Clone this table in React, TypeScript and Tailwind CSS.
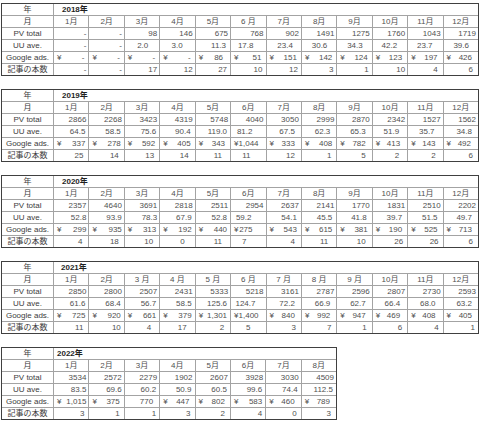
import React from "react";

type G = [boolean, string];
type T = {
  year: string;
  bg: string;
  months: string[];
  pv: string[];
  uu: string[];
  g: G[];
  c: string[];
  pu: number[];
  pg: number[];
  pc: number[];
  titlePl: string;
  wide: boolean;
};

const PR: Record<number, string> = {
  0: "pr-[0px]", 1: "pr-[1px]", 2: "pr-[2px]", 3: "pr-[3px]", 4: "pr-[4px]", 5: "pr-[5px]",
  6: "pr-[6px]", 7: "pr-[7px]", 8: "pr-[8px]", 9: "pr-[9px]", 10: "pr-[10px]", 11: "pr-[11px]",
  12: "pr-[12px]", 13: "pr-[13px]", 14: "pr-[14px]", 15: "pr-[15px]", 16: "pr-[16px]",
  17: "pr-[17px]", 18: "pr-[18px]", 19: "pr-[19px]", 20: "pr-[20px]",
};

const m12 = ["1月", "2月", "3月", "4月", "5月", "6 月", "7月", "8月", "9月", "10月", "11月", "12月"];
const m12b = ["1月", "2月", "3月", "4月", "5月", "6月", "7月", "8月", "9月", "10月", "11月", "12月"];
const m12c = ["1月", "2月", "3 月", "4 月", "5 月", "6 月", "7 月", "8 月", "9 月", "10月", "11月", "12月"];

const y = (a: string[]): G[] => a.map((v) => [true, v]);

const tables: T[] = [
  {
    year: "2018年",
    bg: "bg-[#d9e1f2]",
    months: m12,
    pv: ["-", "-", "98", "146", "675", "768", "902", "1491", "1275", "1760", "1043", "1719"],
    uu: ["-", "-", "2.0", "3.0", "11.3", "17.8", "23.4", "30.6", "34.3", "42.2", "23.7", "39.6"],
    g: y(["-", "-", "-", "-", "86", "51", "151", "142", "124", "123", "197", "426"]),
    c: ["-", "-", "17", "12", "27", "10", "12", "3", "1", "10", "4", "6"],
    pu: [2, 2, 11, 12, 4, 12, 8, 9, 9, 10, 10, 9],
    pg: [4, 4, 4, 4, 7, 4, 4, 4, 4, 5, 5, 6],
    pc: [2, 2, 2, 2, 3, 3, 3, 3, 3, 2, 5, 5],
    titlePl: "pl-[8px]",
    wide: true,
  },
  {
    year: "2019年",
    bg: "bg-[#c6e0b4]",
    months: m12b,
    pv: ["2866", "2268", "3423", "4319", "5748", "4040", "3050", "2999", "2870", "2342", "1527", "1562"],
    uu: ["64.5", "58.5", "75.6", "90.4", "119.0", "81.2", "67.5", "62.3", "65.3", "51.9", "35.7", "34.8"],
    g: y(["337", "278", "592", "405", "343", "1,044", "333", "408", "782", "413", "143", "492"]),
    c: ["25", "14", "13", "14", "11", "11", "12", "1", "5", "2", "2", "6"],
    pu: [3, 3, 3, 4, 3, 13, 6, 6, 6, 8, 8, 6],
    pg: [3, 3, 4, 4, 5, 12, 6, 4, 6, 7, 7, 7],
    pc: [5, 5, 5, 6, 8, 15, 6, 5, 6, 8, 7, 5],
    titlePl: "pl-[8px]",
    wide: true,
  },
  {
    year: "2020年",
    bg: "bg-[#ffd966]",
    months: m12b,
    pv: ["2357", "4640", "3691", "2818", "2511", "2954", "2637", "2141", "1770", "1831", "2510", "2202"],
    uu: ["52.8", "93.9", "78.3", "67.9", "52.8", "59.2", "54.1", "45.5", "41.8", "39.7", "51.5", "49.7"],
    g: y(["299", "935", "313", "192", "440", "275", "543", "615", "381", "190", "525", "713"]),
    c: ["4", "18", "10", "0", "11", "7", "4", "11", "10", "26", "26", "6"],
    pu: [2, 2, 2, 3, 3, 14, 4, 4, 5, 5, 5, 6],
    pg: [2, 2, 3, 3, 3, 13, 4, 4, 4, 5, 5, 6],
    pc: [6, 5, 6, 10, 8, 19, 6, 8, 6, 4, 4, 5],
    titlePl: "pl-[8px]",
    wide: true,
  },
  {
    year: "2021年",
    bg: "bg-[#f4b183]",
    months: m12c,
    pv: ["2850", "2800", "2507", "2431", "5333", "5218", "3161", "2787", "2596", "2807", "2730", "2593"],
    uu: ["61.6", "68.4", "56.7", "58.5", "125.6", "124.7", "72.2", "66.9", "62.7", "66.4", "68.0", "63.2"],
    g: y(["725", "920", "661", "379", "1,301", "1,400", "840", "992", "947", "469", "408", "405"]),
    c: ["11", "10", "4", "17", "2", "5", "3", "7", "1", "6", "4", "1"],
    pu: [3, 3, 3, 3, 3, 10, 6, 6, 6, 7, 7, 6],
    pg: [3, 3, 3, 3, 3, 10, 6, 6, 6, 7, 7, 6],
    pc: [5, 3, 8, 8, 6, 15, 5, 5, 5, 5, 4, 3],
    titlePl: "pl-[7px]",
    wide: true,
  },
  {
    year: "2022年",
    bg: "bg-[#b4c7e7]",
    months: m12b.slice(0, 8),
    pv: ["3534", "2572", "2279", "1902", "2607", "3928", "3030", "4509"],
    uu: ["83.5", "69.6", "60.2", "50.9", "60.5", "99.6", "74.4", "112.5"],
    g: [
      [true, "1,015"], [true, "375"], [false, "770"], [true, "447"],
      [true, "802"], [true, "583"], [true, "460"], [true, "789"],
    ],
    c: ["3", "1", "1", "3", "2", "4", "0", "3"],
    pu: [2, 2, 3, 3, 3, 3, 3, 3],
    pg: [2, 4, 6, 5, 5, 3, 6, 6],
    pc: [4, 4, 3, 4, 5, 3, 4, 5],
    titlePl: "pl-[3px]",
    wide: false,
  },
];

const cell = "h-[11px] leading-[11px] bg-white whitespace-nowrap overflow-hidden";
const label = `${cell} text-center text-[#3c3c3c] text-[8px]`;
const num = `${cell} text-right text-[#505050] text-[8px]`;

function Table({ t }: { t: T }) {
  return (
    <div
      className={`grid ${
        t.wide
          ? "grid-cols-[51px_repeat(12,minmax(0,1fr))] w-[478px]"
          : "grid-cols-[51px_repeat(8,minmax(0,1fr))] w-[336px]"
      } gap-px bg-[#a3a3a3] border border-[#404040]`}
    >
      <div className={`${label} text-[7px]`}>年</div>
      <div
        className={`${cell} ${t.bg} ${t.wide ? "col-span-12" : "col-span-8"} ${t.titlePl} text-[8px] font-bold text-[#1f1f1f]`}
      >
        {t.year}
      </div>

      <div className={`${label} text-[7px]`}>月</div>
      {t.months.map((m, i) => (
        <div key={i} className={`${label} text-[7.5px] text-[#505050]`}>
          {m}
        </div>
      ))}

      <div className={label}>PV total</div>
      {t.pv.map((v, i) => (
        <div key={i} className={`${num} pr-[2px]`}>
          {v}
        </div>
      ))}

      <div className={label}>UU ave.</div>
      {t.uu.map((v, i) => (
        <div key={i} className={`${num} ${PR[t.pu[i]]}`}>
          {v}
        </div>
      ))}

      <div className={label}>Google ads.</div>
      {t.g.map(([yen, v], i) => (
        <div key={i} className={`${num} flex justify-between pl-[3px] ${PR[t.pg[i]]}`}>
          <span>{yen ? "¥" : ""}</span>
          <span>{v}</span>
        </div>
      ))}

      <div className={`${label} text-[6.5px]`}>記事の本数</div>
      {t.c.map((v, i) => (
        <div key={i} className={`${num} ${PR[t.pc[i]]}`}>
          {v}
        </div>
      ))}
    </div>
  );
}

export default function App() {
  return (
    <div className="w-[480px] h-[424px] bg-white overflow-hidden pt-[3px] pl-[1px] flex flex-col gap-[13px] font-['Liberation_Sans','Noto_Sans_CJK_JP',sans-serif]">
      {tables.map((t) => (
        <Table key={t.year} t={t} />
      ))}
    </div>
  );
}
